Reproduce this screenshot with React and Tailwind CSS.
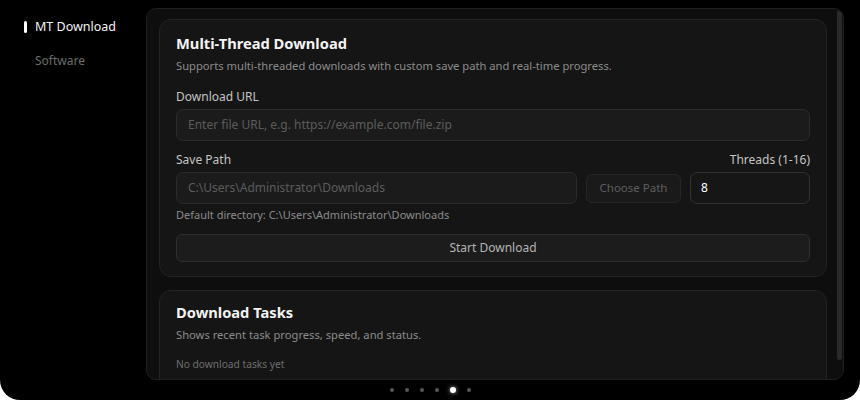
import React from 'react';

const FONT = { fontFamily: '"Noto Sans", "Liberation Sans", sans-serif' };

function Sidebar() {
  return (
    <div className="w-[146px] shrink-0 pt-[19px]">
      <div className="flex items-center h-[16px] pl-[24px]">
        <span className="w-[3px] h-[12px] rounded-full bg-white" />
        <span className="ml-[8px] text-[12.5px] text-[#f2f2f2]">MT Download</span>
      </div>
      <div className="flex items-center h-[16px] pl-[35px] mt-[18px]">
        <span className="text-[12px] text-[#6b6b6b]">Software</span>
      </div>
    </div>
  );
}

function Field({ placeholder, className = '' }) {
  return (
    <div
      className={`h-[32px] flex items-center px-[11px] rounded-[7px] bg-[#1b1b1b] border border-[#2c2c2c] text-[12px] text-[#5c5c5c] ${className}`}
    >
      {placeholder}
    </div>
  );
}

function DownloadCard() {
  return (
    <div className="rounded-[12px] bg-[#151515] border border-[#242424] px-[16px] pt-[13px] pb-[14px]">
      <h2 className="text-[14.7px] font-bold leading-[20px] text-[#f3f3f3]">Multi-Thread Download</h2>
      <p className="mt-[5px] text-[11.2px] leading-[16px] text-[#8c8c8c]">
        Supports multi-threaded downloads with custom save path and real-time progress.
      </p>

      <div className="mt-[15px] text-[12px] leading-[16px] text-[#c4c4c4]">Download URL</div>
      <Field className="mt-[4px]" placeholder="Enter file URL, e.g. https://example.com/file.zip" />

      <div className="mt-[11px] flex justify-between text-[12px] leading-[16px] text-[#c4c4c4]">
        <span>Save Path</span>
        <span>Threads (1-16)</span>
      </div>
      <div className="mt-[4px] flex items-center gap-[9px]">
        <Field className="flex-1" placeholder="C:\Users\Administrator\Downloads" />
        <button className="h-[29px] w-[95px] rounded-[6px] bg-[#1a1a1a] border border-[#262626] text-[11.5px] text-[#5e5e5e]">
          Choose Path
        </button>
        <div className="h-[32px] w-[120px] flex items-center px-[10px] rounded-[7px] bg-[#161616] border border-[#333333] text-[12px] text-white">
          8
        </div>
      </div>
      <div className="mt-[3px] text-[11px] leading-[16px] text-[#8c8c8c]">
        Default directory: C:\Users\Administrator\Downloads
      </div>
      <button className="mt-[11px] w-full h-[28px] rounded-[6px] bg-[#1c1c1c] border border-[#2e2e2e] text-[12px] text-[#b4b4b4]">
        Start Download
      </button>
    </div>
  );
}

function TasksCard() {
  return (
    <div className="mt-[13px] rounded-[12px] bg-[#151515] border border-[#242424] px-[16px] pt-[11px] pb-[20px]">
      <h2 className="text-[14.7px] font-bold leading-[20px] text-[#f3f3f3]">Download Tasks</h2>
      <p className="mt-[5px] text-[11.2px] leading-[16px] text-[#8c8c8c]">
        Shows recent task progress, speed, and status.
      </p>
      <div className="mt-[14px] text-[10.2px] leading-[14px] text-[#6e6e6e]">No download tasks yet</div>
    </div>
  );
}

function Dots() {
  return (
    <div className="h-[20px] flex items-center justify-center gap-[11px]">
      {[0, 1, 2, 3].map((i) => (
        <span key={i} className="w-[4px] h-[4px] rounded-full bg-[#555555]" />
      ))}
      <span className="w-[6px] h-[6px] rounded-full bg-white shadow-[0_0_4px_rgba(255,255,255,0.7)]" />
      <span className="w-[4px] h-[4px] rounded-full bg-[#555555]" />
    </div>
  );
}

export default function App() {
  return (
    <div className="bg-white w-[860px] h-[400px]" style={FONT}>
      <div className="w-[860px] h-[400px] bg-black rounded-b-[20px] flex flex-col overflow-hidden">
        <div className="flex h-[380px]">
          <Sidebar />
          <div className="mt-[8px] w-[698px] h-[372px] rounded-[10px] bg-[#0e0e0e] border border-[#1f1f1f] flex overflow-hidden">
            <div className="flex-1 overflow-hidden pl-[12px] pr-[10px] pt-[10px]">
              <DownloadCard />
              <TasksCard />
            </div>
            <div className="w-[6px] pt-[1px] pr-[1px]">
              <div className="w-[5px] h-[350px] rounded-full bg-[#2a2a2a]" />
            </div>
          </div>
        </div>
        <Dots />
      </div>
    </div>
  );
}
